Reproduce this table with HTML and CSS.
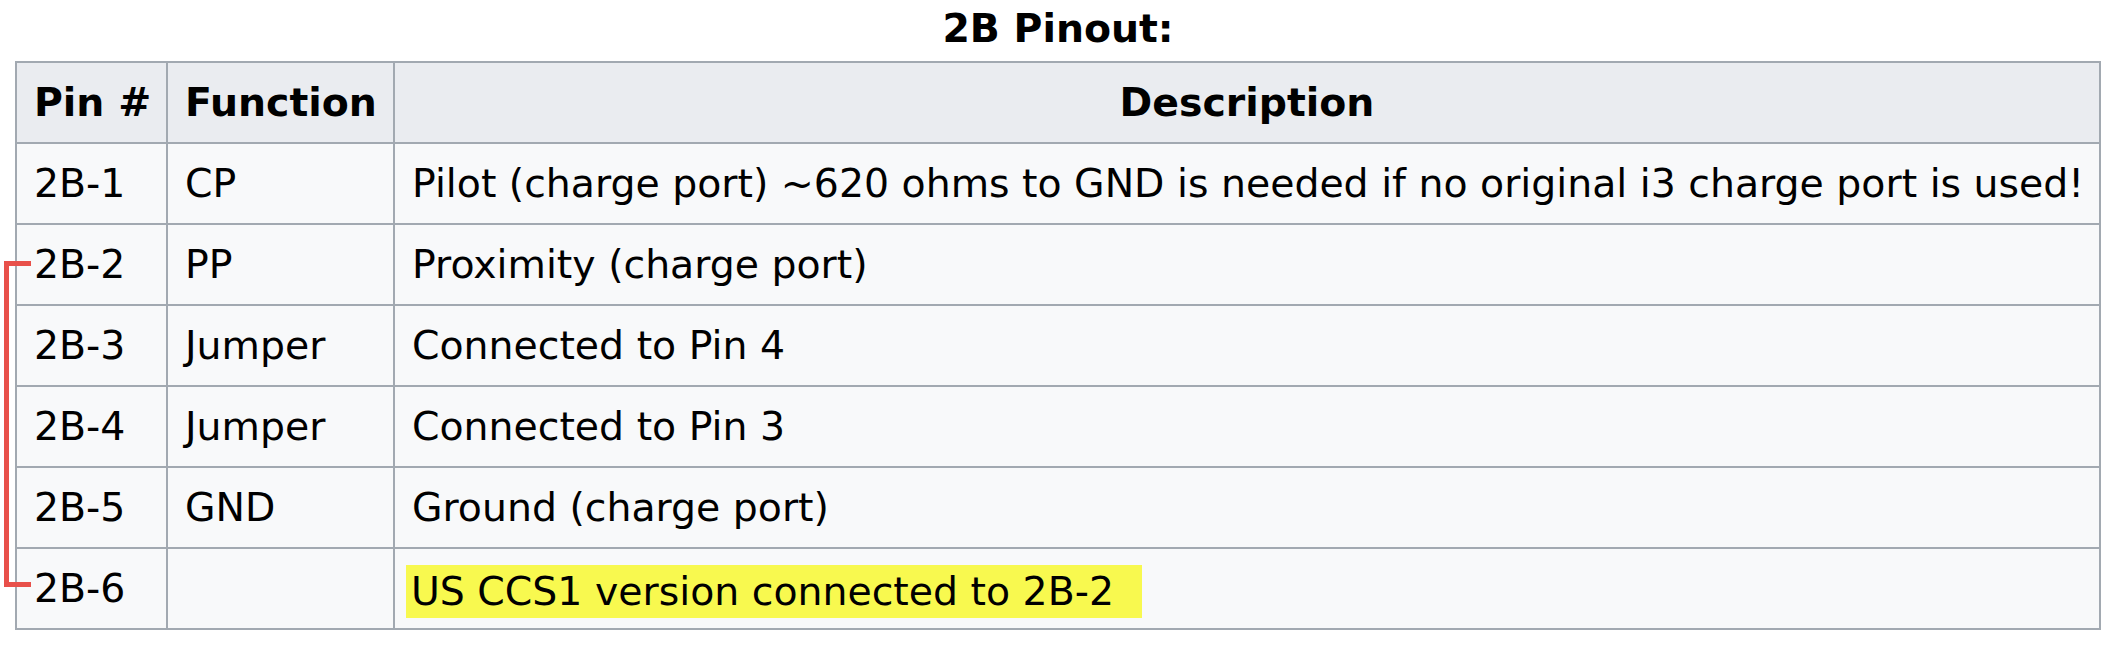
FILE: index.html
```html
<!DOCTYPE html>
<html lang="en">
<head>
<meta charset="utf-8">
<title>2B Pinout</title>
<link rel="stylesheet" href="styles.css">
</head>
<body>
<div class="wrap">
  <table class="wikitable">
    <caption>2B Pinout:</caption>
    <colgroup>
      <col class="c1">
      <col class="c2">
      <col class="c3">
    </colgroup>
    <thead>
      <tr><th class="left">Pin #</th><th class="left">Function</th><th>Description</th></tr>
    </thead>
    <tbody>
      <tr><td>2B-1</td><td>CP</td><td>Pilot (charge port) ~620 ohms to GND is needed if no original i3 charge port is used!</td></tr>
      <tr><td>2B-2</td><td>PP</td><td>Proximity (charge port)</td></tr>
      <tr><td>2B-3</td><td>Jumper</td><td>Connected to Pin 4</td></tr>
      <tr><td>2B-4</td><td>Jumper</td><td>Connected to Pin 3</td></tr>
      <tr><td>2B-5</td><td>GND</td><td>Ground (charge port)</td></tr>
      <tr><td>2B-6</td><td></td><td><span class="mark">US CCS1 version connected to 2B-2</span></td></tr>
    </tbody>
  </table>
  <div class="bracket"></div>
</div>
</body>
</html>
```

FILE: styles.css
```css
html, body {
  margin: 0;
  padding: 0;
  background: #ffffff;
}

body {
  font-family: "DejaVu Sans", "Liberation Sans", sans-serif;
  font-size: 39.4px;
  color: #000000;
}

.wrap {
  position: relative;
  padding-left: 15px;
}

.wikitable {
  border-collapse: collapse;
  table-layout: fixed;
  width: 2086px;
  background: #f8f9fa;
  color: #000000;
}

.wikitable caption {
  font-weight: bold;
  line-height: 57px;
  padding: 0 0 4px 0;
  text-align: center;
}

.c1 { width: 151px; }
.c2 { width: 227px; }
.c3 { width: auto; }

.wikitable th,
.wikitable td {
  border: 2px solid #a2a9b1;
  padding: 8px 17px;
  line-height: 63px;
  white-space: nowrap;
  vertical-align: middle;
}

.wikitable th {
  background: #eaecf0;
  font-weight: bold;
  text-align: center;
}

.wikitable th.left {
  text-align: left;
}

.wikitable td {
  text-align: left;
}

.mark {
  display: inline-block;
  vertical-align: top;
  background: #f8f94f;
  margin: 8px 0 0 -6px;
  padding: 0 28px 0 5px;
  line-height: 53px;
}

.bracket {
  position: absolute;
  left: 4px;
  top: 261px;
  width: 22px;
  height: 316px;
  border: 5px solid #e8504a;
  border-right: none;
}
```
